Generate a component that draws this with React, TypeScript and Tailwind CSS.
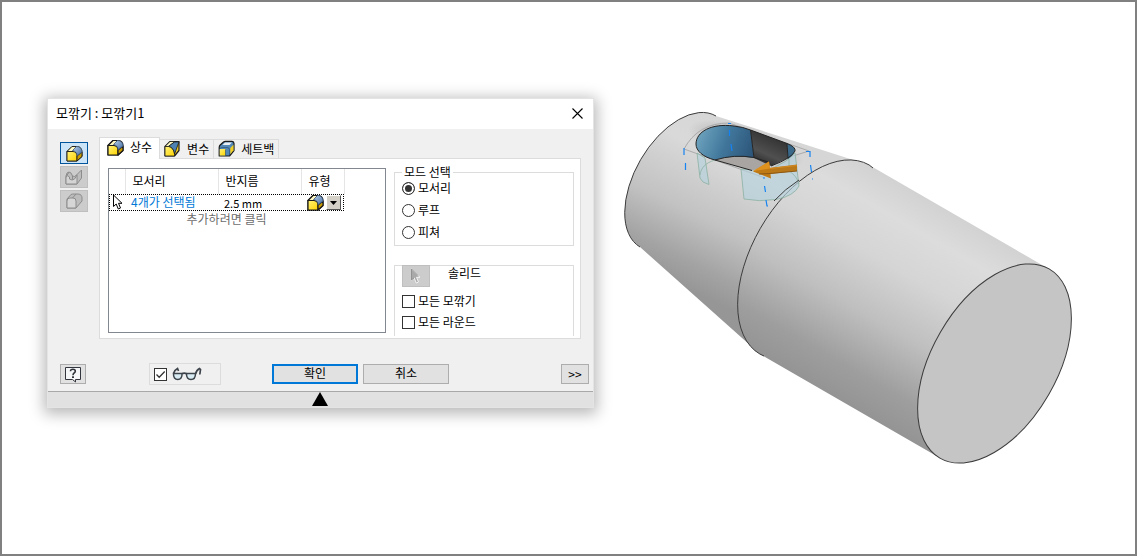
import { useState, type ReactNode } from "react";

const buttonFace = "border border-[#adadad] bg-[#e1e1e1]";

type FilletKind = "constant" | "variable" | "setback";

function FilletIcon({ kind, bold = false }: { kind: FilletKind; bold?: boolean }) {
  const w = bold ? 1.2 : 0.9;
  return (
    <svg width="17" height="17" viewBox="0 0 17 17" aria-hidden="true" className="shrink-0">
      <defs>
        <linearGradient id="filletYellow" x1="0" y1="0" x2="1" y2="1">
          <stop offset="0" stopColor="#fff27a" />
          <stop offset="1" stopColor="#ffd400" />
        </linearGradient>
        <linearGradient id="filletBlue" x1="0" y1="0" x2="1" y2="1">
          <stop offset="0" stopColor="#b9d3ee" />
          <stop offset="1" stopColor="#41699f" />
        </linearGradient>
      </defs>
      {kind === "constant" && (
        <g stroke="#1a1a1a" strokeWidth={w} strokeLinejoin="round">
          <path d="M1 6.5 6 1.5H11.5C14.5 1.8 16 4 16 7V11.5L11 16H1Z" fill="#f3c800" />
          <path d="M1 6.5 6 1.5H11L7 6.5Z" fill="#fff9c4" />
          <path d="M1 6.5H7C9.8 6.8 11 8.5 11 11V16H1Z" fill="url(#filletYellow)" />
          <path d="M11 11 16 7V11.5L11 16Z" fill="#c79a00" />
          <path d="M6.5 5.5 10.5 1.5C14 1.5 16 3.8 16 7L11.2 10.8C11.2 8 9.2 6 6.5 5.5Z" fill="url(#filletBlue)" stroke="#3d5878" strokeWidth="0.8" />
        </g>
      )}
      {kind === "variable" && (
        <g stroke="#1a1a1a" strokeWidth={w} strokeLinejoin="round">
          <path d="M1 6.5 6 1.5H15V10.5L10.500 16H1Z" fill="#f3d022" />
          <path d="M1 6.5 6 1.5H11L4.5 6.5Z" fill="#fff9c4" strokeWidth="0.8" />
          <path d="M1 6.5H4.500C8 7 10 10 10.500 14V16H1Z" fill="url(#filletYellow)" strokeWidth="0.8" />
          <path d="M4.500 6.3 10.500 2 15 1.800 10.600 14C10 9.5 8 7 4.500 6.3Z" fill="#4d82b3" strokeWidth="0.8" />
        </g>
      )}
      {kind === "setback" && (
        <g stroke="#1a1a1a" strokeWidth={w} strokeLinejoin="round">
          <path d="M1.2 7.5Q1.2 6 2.2 5L5.5 2Q6.2 1.3 7.5 1.3H14Q16 1.5 16 3.5V10.5L11.5 16H1.2Z" fill="#5288b8" />
          <path d="M4.500 5 7 2.500H14L11.500 5Z" fill="#e9eef2" stroke="none" />
          <path d="M1.7 9H7.500V15.500H1.7Z" fill="url(#filletYellow)" stroke="none" />
          <path d="M12.3 8 15.500 4.7V10.2L12.3 14.2Z" fill="#f3d022" stroke="none" />
          <path d="M1.5 9Q2.5 7.500 5 7.500H9Q11.500 7.500 11.500 9.500V15.5M7.500 9.500V16" fill="none" strokeWidth="0.6" stroke="#26486a" />
        </g>
      )}
    </svg>
  );
}

function FaceFilletIcon() {
  return (
    <svg width="18" height="16" viewBox="0 0 18 16" aria-hidden="true">
      <g stroke="#8c8c8c" strokeLinejoin="round">
        <path d="M1 7 2 4Q4 2 6 4L7.500 7Q9.500 8.500 11.500 6L16.500 1V9L12 15H1Z" fill="#bdbdbd" />
        <path d="M1 8Q2.500 5.500 4.500 8V10Q7 12 9.500 10L12 6V15H1Z" fill="#d4d4d4" />
        <path d="M7.500 7V10.500M1 8 4 3" fill="none" />
      </g>
    </svg>
  );
}

function FullRoundIcon() {
  return (
    <svg width="17" height="16" viewBox="0 0 17 16" aria-hidden="true">
      <g stroke="#8c8c8c" strokeLinejoin="round">
        <path d="M1 6 5 1.500Q6 1 8 1H12C15 1 16 3 16 5V8L10 15H1Z" fill="#bcbcbc" />
        <path d="M1 8Q1 5 4 5H7Q10 5 10 8V15H1Z" fill="#d6d6d6" />
        <path d="M6.500 5 10 1" fill="none" />
      </g>
    </svg>
  );
}

function CursorIcon({ dim = false }: { dim?: boolean }) {
  return (
    <svg width="12" height="17" viewBox="0 0 12 17" aria-hidden="true">
      <path
        d="M1.500 1V12.500L4.200 10 6.300 15 8.500 14 6.500 9.300H10Z"
        fill={dim ? "#a9a9a9" : "#fff"}
        stroke={dim ? "#f4f4f4" : "#000"}
        strokeWidth="1"
      />
      {dim && <path d="M1.500 1V12L4 10M1.500 1 8 7.500" stroke="#929292" fill="none" />}
    </svg>
  );
}

function HelpIcon() {
  return (
    <svg width="18" height="17" viewBox="0 0 18 17" aria-hidden="true">
      <path d="M1.500 1.500H16.500V13.500H11.500V16L8.500 13.500H1.500Z" fill="#f4f6f8" stroke="#33363c" />
      <path d="M6.500 5.200C6.500 2.500 11.300 2.600 11.300 5.200C11.300 7 9 7 9 9.200" fill="none" stroke="#30343a" strokeWidth="1.600" />
      <rect x="8" y="10.300" width="2" height="1.700" fill="#30343a" />
    </svg>
  );
}

function GlassesIcon() {
  return (
    <svg width="30" height="14" viewBox="0 0 30 14" aria-hidden="true">
      <g fill="#d9ecf3" stroke="#3d444b" strokeWidth="1.500">
        <path d="M1.500 6.500H10C10.300 10.500 8.500 12.500 5.800 12.500C3 12.500 1.300 10.500 1.500 6.500Z" />
        <path d="M14.500 6.500H23.500C23.500 10.500 22 12.500 19 12.500C16 12.500 14.300 10.500 14.500 6.500Z" />
      </g>
      <path d="M10 6.800Q12.200 5.500 14.500 6.800M1.500 6.500Q2.500 3 5.500 1.500L6.500 4M23.500 7Q24.500 3 27.500 1.500L28.500 2.500 27.800 7.500" fill="none" stroke="#3d444b" strokeWidth="1.700" />
    </svg>
  );
}

function SideButton({ label, active = false, children }: { label: string; active?: boolean; children: ReactNode }) {
  return (
    <button
      type="button"
      aria-label={label}
      disabled={!active}
      className={
        "flex h-[22px] w-7 items-center justify-center " +
        (active ? "border border-[#00549c] bg-[#cce4f7]" : "border border-[#bfbfbf] bg-[#cccccc]")
      }
    >
      {children}
    </button>
  );
}

function Check({ label, checked, onChange, children }: { label?: string; checked: boolean; onChange: (v: boolean) => void; children: ReactNode }) {
  return (
    <label className="flex h-4 items-center gap-[3px]">
      <span className="grid size-[13px] shrink-0">
        <input
          type="checkbox"
          aria-label={label}
          checked={checked}
          onChange={(e) => onChange(e.target.checked)}
          className="col-start-1 row-start-1 size-[13px] appearance-none border border-[#333] bg-white"
        />
        {checked && (
          <svg viewBox="0 0 13 13" className="pointer-events-none col-start-1 row-start-1 size-[13px]" aria-hidden="true">
            <path d="M2.500 6.500 5.200 9.300 10.700 3.500" fill="none" stroke="#333" strokeWidth="1.300" />
          </svg>
        )}
      </span>
      {children}
    </label>
  );
}

const tabs: { kind: FilletKind; label: string }[] = [
  { kind: "constant", label: "상수" },
  { kind: "variable", label: "변수" },
  { kind: "setback", label: "세트백" },
];

function EdgeTable() {
  return (
    <div className="mt-1 h-[165px] min-w-0 flex-1 border border-[#828790] bg-white">
      <table className="w-[235px] table-fixed border-collapse text-left leading-4">
        <colgroup>
          <col className="w-4" />
          <col className="w-[93px]" />
          <col className="w-[83px]" />
          <col className="w-[43px]" />
        </colgroup>
        <thead>
          <tr className="h-[25px]">
            <th className="border-r border-[#e5e5e5]" aria-label="선택" />
            <th className="border-r border-[#e5e5e5] pb-0.5 pl-[7px] font-normal">모서리</th>
            <th className="border-r border-[#e5e5e5] pb-0.5 pl-[7px] font-normal">반지름</th>
            <th className="border-r border-[#e5e5e5] pb-0.5 pl-[7px] font-normal">유형</th>
          </tr>
        </thead>
        <tbody>
          <tr className="h-[17px] outline-1 -outline-offset-1 outline-dotted outline-black">
            <td className="pl-[3px]"><CursorIcon /></td>
            <td className="pb-0.5 pl-1.5 leading-[14px] text-[#0078d7]">4개가 선택됨</td>
            <td className="pl-1.5">
              <input aria-label="반지름" defaultValue="2.5 mm" className="block h-4 w-full bg-transparent text-[11px] outline-none" />
            </td>
            <td className="pl-1.5">
              <div className="flex h-[17px] items-center gap-0.5">
                <FilletIcon kind="constant" bold />
                <button type="button" aria-label="유형" className="flex h-[15px] w-[15px] items-center justify-center border border-t-white border-r-[#555] border-b-[#555] border-l-white bg-[#d4d0c8]">
                  <svg width="7" height="4" viewBox="0 0 7 4" aria-hidden="true"><path d="M0 0H7L3.500 4Z" /></svg>
                </button>
              </div>
            </td>
          </tr>
          <tr>
            <td colSpan={4} className="text-center text-[#6d6d6d]">추가하려면 클릭</td>
          </tr>
        </tbody>
      </table>
    </div>
  );
}

function FilletDialog() {
  const [tab, setTab] = useState("상수");
  const [mode, setMode] = useState("모서리");
  const [allFillets, setAllFillets] = useState(false);
  const [allRounds, setAllRounds] = useState(false);
  const [preview, setPreview] = useState(true);

  return (
    <section
      aria-label="모깎기"
      className="w-[547px] shrink-0 border border-[#e4e4e4] bg-[#f0f0f0] shadow-[0_3px_14px_3px_rgba(0,0,0,0.28)]"
    >
      <header className="flex h-[30px] items-center justify-between bg-white pr-2.5 pb-0.5 pl-2 text-[13px]">
        <h1>모깎기 : 모깎기1</h1>
        <button type="button" aria-label="닫기">
          <svg width="11" height="11" viewBox="0 0 11 11" aria-hidden="true">
            <path d="M0.500 0.500 10.500 10.500M10.500 0.500 0.500 10.500" stroke="#000" strokeWidth="1.100" />
          </svg>
        </button>
      </header>

      <div className="flex gap-[11px] px-3 pt-2">
        <div className="flex flex-col gap-0.5 pt-[5px]">
          <SideButton label="모서리 모깎기" active><FilletIcon kind="constant" /></SideButton>
          <SideButton label="면 모깎기"><FaceFilletIcon /></SideButton>
          <SideButton label="전체 둥근 모깎기"><FullRoundIcon /></SideButton>
        </div>

        <div className="min-w-0 flex-1">
          <div role="tablist" className="flex items-end">
            {tabs.map((t) => (
              <button
                key={t.kind}
                type="button"
                role="tab"
                aria-selected={tab === t.label}
                onClick={() => setTab(t.label)}
                className={
                  tab === t.label
                    ? "-mb-px flex h-[22px] items-center gap-1.5 border border-b-0 border-[#dcdcdc] bg-white px-[7px] pb-[3px]"
                    : "flex h-[19px] items-center gap-1.5 border border-b-0 border-l-0 border-[#dcdcdc] px-1 pb-px"
                }
              >
                <FilletIcon kind={t.kind} bold />
                {t.label}
              </button>
            ))}
          </div>

          <div className="flex gap-2 border border-[#dcdcdc] bg-white pt-[5px] pr-1.5 pb-0.5 pl-2">
            <EdgeTable />
            <div className="flex w-[180px] flex-col gap-[19px]">
              <fieldset className="border border-[#dcdcdc] px-[7px] pb-[5px]">
                <legend className="px-0.5 leading-4">모드 선택</legend>
                <div className="flex flex-col gap-1.5">
                  {["모서리", "루프", "피쳐"].map((name) => (
                    <label key={name} className="flex h-4 items-center gap-[3px]">
                      <input
                        type="radio"
                        name="mode"
                        checked={mode === name}
                        onChange={() => setMode(name)}
                        className="size-[13px] appearance-none rounded-full border border-[#333] bg-white checked:bg-[#333] checked:shadow-[inset_0_0_0_2px_white]"
                      />
                      {name}
                    </label>
                  ))}
                </div>
              </fieldset>
              <div role="group" aria-label="솔리드" className="border border-b-0 border-[#dcdcdc] px-[7px] pb-1.5">
                <div className="-mt-px flex items-start">
                  <button type="button" disabled aria-label="솔리드 선택" className="flex h-[22px] w-7 items-center justify-center border border-[#bfbfbf] bg-[#cccccc]">
                    <CursorIcon dim />
                  </button>
                  <span className="pl-[18px] leading-4">솔리드</span>
                </div>
                <div className="flex flex-col gap-[5px] pt-1.5">
                  <Check checked={allFillets} onChange={setAllFillets}>모든 모깎기</Check>
                  <Check checked={allRounds} onChange={setAllRounds}>모든 라운드</Check>
                </div>
              </div>
            </div>
          </div>
        </div>
      </div>

      <div className="flex items-center pt-6 pr-1 pb-1.5 pl-3">
        <button type="button" aria-label="도움말" className={`${buttonFace} flex h-5 w-[26px] items-center justify-center`}>
          <HelpIcon />
        </button>
        <div className="ml-[63px] flex h-[22px] w-[72px] items-center border border-[#dcdcdc] pl-1">
          <Check label="미리보기" checked={preview} onChange={setPreview}>
            <span className="pl-0.5"><GlassesIcon /></span>
          </Check>
        </div>
        <button type="button" className="ml-[51px] flex h-5 w-[86px] items-center justify-center border-2 border-[#0078d7] bg-[#e1e1e1] pb-0.5 leading-[14px]">확인</button>
        <button type="button" className={`${buttonFace} ml-[5px] flex h-5 w-[86px] items-center justify-center pb-0.5 leading-4`}>취소</button>
        <button type="button" aria-label="자세히" className={`${buttonFace} ml-auto h-5 w-7 leading-4`}>&gt;&gt;</button>
      </div>

      <footer className="flex h-4 justify-center border-t border-[#a8a8a8] bg-[#e1e1e1] pr-0.5">
        <svg width="16" height="15" viewBox="0 0 16 15" aria-hidden="true"><path d="M8 0 16 14H0Z" /></svg>
      </footer>
    </section>
  );
}

function ShaftModel() {
  return (
    <svg viewBox="594 98 541 380" className="h-auto min-w-0 flex-1" role="img" aria-label="축 모형">
      <defs>
        <linearGradient id="body" gradientUnits="userSpaceOnUse" x1="869" y1="165" x2="760" y2="354">
          <stop offset="0" stopColor="#d2d2d2" />
          <stop offset="0.150" stopColor="#dcdcdc" />
          <stop offset="0.350" stopColor="#d5d5d5" />
          <stop offset="0.600" stopColor="#bfbfbf" />
          <stop offset="0.850" stopColor="#9e9e9e" />
          <stop offset="1" stopColor="#949494" />
        </linearGradient>
        <linearGradient id="cone" gradientUnits="userSpaceOnUse" x1="760" y1="130" x2="682" y2="286">
          <stop offset="0" stopColor="#d6d6d6" />
          <stop offset="0.250" stopColor="#d9d9d9" />
          <stop offset="0.600" stopColor="#c2c2c2" />
          <stop offset="0.850" stopColor="#a4a4a4" />
          <stop offset="1" stopColor="#969696" />
        </linearGradient>
        <linearGradient id="wall" gradientUnits="userSpaceOnUse" x1="698" y1="130" x2="754" y2="152">
          <stop offset="0" stopColor="#6fa5bf" />
          <stop offset="0.500" stopColor="#41779b" />
          <stop offset="1" stopColor="#2c5579" />
        </linearGradient>
        <linearGradient id="dark" gradientUnits="userSpaceOnUse" x1="775" y1="137" x2="762" y2="166">
          <stop offset="0" stopColor="#333" />
          <stop offset="0.600" stopColor="#505050" />
          <stop offset="1" stopColor="#292929" />
        </linearGradient>
        <radialGradient id="rim">
          <stop offset="0.600" stopColor="#666" stopOpacity="0.750" />
          <stop offset="1" stopColor="#888" stopOpacity="0" />
        </radialGradient>
      </defs>

      {/* tapered section */}
      <path d="M716 116 869 165 760 354 640 247A75.500 43.200 -60 0 1 716 116Z" fill="url(#cone)" />
      <path d="M640 247A75.500 43.200 -60 0 1 716 116" fill="none" stroke="#3c3c3c" />

      {/* straight section */}
      <path d="M869.100 164.930 1049 269 940 458 759.900 354.070A109 62.400 -60 0 1 869.100 164.930Z" fill="url(#body)" />
      <path d="M764 356 759.900 354.070A109 62.400 -60 0 1 869.100 164.930L873 168" fill="none" stroke="#3c3c3c" />
      <ellipse cx="994.500" cy="363.500" rx="109.200" ry="62.500" transform="rotate(-60 994.500 363.500)" fill="#c5c5c5" stroke="#3c3c3c" />

      {/* slot shading */}
      <ellipse cx="746" cy="145" rx="60" ry="19" transform="rotate(17 746 145)" fill="url(#rim)" opacity="0.350" />
      <path d="M684 149Q698 123 729 123L809 151 780 160M684 149 765 178" fill="none" stroke="#aaa" />

      {/* fillet preview surfaces */}
      <g fill="#b5d3df" fillOpacity="0.650" stroke="#8fb3a5" strokeOpacity="0.850">
        <path d="M697 153 700 178 703 182 709 184.500 705 158Z" />
        <path d="M700 175C701 168 705 163 715 160" fill="none" />
        <path d="M741 169 744 199Q759 202 776 199.500Q794 196 799 186L795 153 786 161 768 171Z" />
        <path d="M789 159V171Q797 176 799 184" fill="none" />
      </g>

      {/* shoulder edge seen through the preview */}
      <path d="M774 201Q785 189 799 180" fill="none" stroke="#3c3c3c" />

      {/* slot */}
      <path d="M715 160Q734 154 754 157.500 768 162 770 166L752 170.500Z" fill="#a8a5a3" />
      <path d="M696 144C696 132 711 123 734 126Q743 127 750.500 130L754 158Q734 154 715 160C703 157 696 151 696 144Z" fill="url(#wall)" />
      <path d="M750.500 130 787 143.500 788 158 771 166 754 158Z" fill="url(#dark)" />
      <path d="M787 143.500Q794 146 795 150Q794 155 788 159Z" fill="#396889" />
      <path
        d="M715 160C703 157 696 151 696 144C696 132 711 123 734 126Q743 127 750.500 130L787 143.500Q796 147 795 151Q792 158 771 166M750.500 130 754 158M787 143.500 788 158.500M715 160Q734 154 754 157.500L768 162M715 160 752 170.500"
        fill="none"
        stroke="#242424"
      />

      {/* selected edge highlight */}
      <path
        d="M684 148V155M685.500 163V170M728 123.500H731M729.500 130V136M731 144 732 151M806 151.500H810V157M810.500 165 811.500 172M812 179H813M763 178H765M764.500 186 765.500 192M766 200 767 206H768"
        fill="none"
        stroke="#1683f2"
        strokeWidth="1.200"
      />

      {/* drag arrow */}
      <path d="M769 168 797 164.500V171L770 174Z" fill="#b97819" />
      <path d="M753 171.500 769 161.500 771 178.500Z" fill="#c07a13" />
      <path d="M753 171 769 161.500 770 168.500Z" fill="#df911e" />
      <path d="M770 168.500 797 165.500" stroke="#d68a20" />
      <path d="M759 174 770 173.500 797 171" stroke="#8c5813" fill="none" />
    </svg>
  );
}

export default function App() {
  return (
    <main className="flex min-h-screen items-start border-2 border-[#808080] bg-white pt-24 pl-[45px] font-['Noto_Sans_CJK_KR','Noto_Sans',sans-serif] text-xs text-black">
      <FilletDialog />
      <ShaftModel />
    </main>
  );
}
